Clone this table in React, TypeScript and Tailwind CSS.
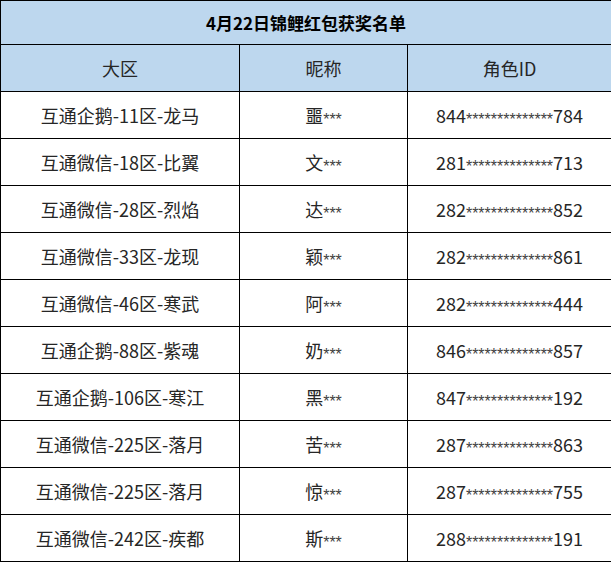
import React from 'react';

const rows: [string, string, string][] = [
  ['互通企鹅-11区-龙马', '噩', '844**************784'],
  ['互通微信-18区-比翼', '文', '281**************713'],
  ['互通微信-28区-烈焰', '达', '282**************852'],
  ['互通微信-33区-龙现', '颖', '282**************861'],
  ['互通微信-46区-寒武', '阿', '282**************444'],
  ['互通企鹅-88区-紫魂', '奶', '846**************857'],
  ['互通企鹅-106区-寒江', '黑', '847**************192'],
  ['互通微信-225区-落月', '苦', '287**************863'],
  ['互通微信-225区-落月', '惊', '287**************755'],
  ['互通微信-242区-疾都', '斯', '288**************191'],
];

// asterisks in the source sit low and star-shaped, so give them their own font
const Stars = ({ s }: { s: string }) => (
  <span
    className="text-[16px] leading-none align-[-2px] text-[#404040]"
    style={{ fontFamily: '"Liberation Sans", sans-serif' }}
  >
    {s}
  </span>
);

const MaskedId = ({ id }: { id: string }) => {
  const m = id.match(/^(\d+)(\*+)(\d+)$/);
  if (!m) return <>{id}</>;
  return (
    <>
      {m[1]}
      <Stars s={m[2]} />
      {m[3]}
    </>
  );
};

export default function App() {
  return (
    <div
      className="w-[611px] h-[562px] bg-white text-[#262626]"
      style={{ fontFamily: '"Microsoft YaHei", "Noto Sans CJK SC", sans-serif' }}
    >
      <table className="w-[611px] border-collapse table-fixed">
        <colgroup>
          <col className="w-[239px]" />
          <col className="w-[168px]" />
          <col className="w-[204px]" />
        </colgroup>
        <thead>
          <tr className="h-[44px] bg-[#bdd7ee]">
            <th colSpan={3} className="border border-black text-[17px] font-bold text-black">
              4月22日锦鲤红包获奖名单
            </th>
          </tr>
          <tr className="h-[47px] bg-[#bdd7ee]">
            <th className="border border-black text-[18px] font-normal">大区</th>
            <th className="border border-black text-[18px] font-normal">昵称</th>
            <th className="border border-black text-[18px] font-normal">角色ID</th>
          </tr>
        </thead>
        <tbody>
          {rows.map(([zone, nick, id], i) => (
            <tr key={i} className="h-[47px]">
              <td className="border border-black text-center text-[18px]">{zone}</td>
              <td className="border border-black text-center text-[18px]">
                {nick}
                <Stars s="***" />
              </td>
              <td className="border border-black text-center text-[18px]">
                <MaskedId id={id} />
              </td>
            </tr>
          ))}
        </tbody>
      </table>
    </div>
  );
}
